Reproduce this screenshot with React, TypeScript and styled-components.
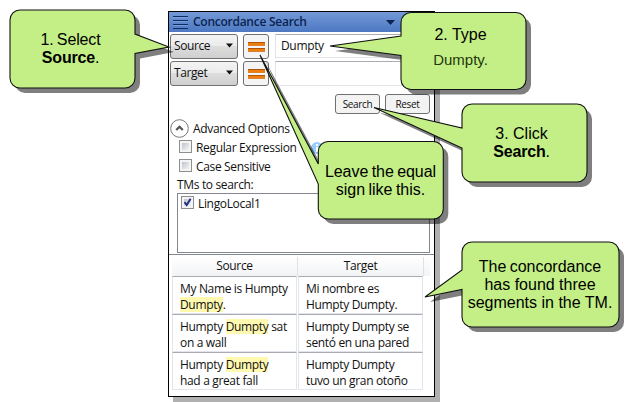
import React from 'react';
import styled, { createGlobalStyle } from 'styled-components';

const Global = createGlobalStyle`
  * { box-sizing: border-box; }
  body { margin: 0; background: #fff; }
`;

const Stage = styled.main`
  position: relative;
  width: 634px;
  height: 402px;
  overflow: hidden;
  padding: 11px 0 0 168px;
  font-family: 'Open Sans', 'Noto Sans', sans-serif;
  font-size: 12px;
  line-height: 16px;
  letter-spacing: -0.34px;
  color: #111;
`;

const Panel = styled.section`
  width: 267px;
  height: 386px;
  border: 1px solid #000;
  background: #fff;
  box-shadow: 5px 5px 0 #b0b0b0;
  display: flex;
  flex-direction: column;
`;

const TitleBar = styled.header`
  height: 20px;
  flex: none;
  display: flex;
  align-items: center;
  padding: 0 39px 0 4px;
  background: linear-gradient(#7399d6, #4d78c2);
`;

const TitleText = styled.h1`
  flex: 1;
  margin: 0 0 1px 5px;
  font-size: 12px;
  font-weight: 600;
  line-height: 18px;
  letter-spacing: -0.26px;
  color: #0b2350;
`;

const SearchRow = styled.div`
  display: flex;
  height: 27px;
  flex: none;
  padding-left: 1px;
`;

const SearchRows = styled.div`
  padding-top: 2px;
`;

const Dropdown = styled.button`
  width: 68px;
  height: 25px;
  padding: 0 4px 2px 3px;
  display: flex;
  align-items: center;
  justify-content: space-between;
  border: 1px solid #707070;
  border-radius: 3px;
  background: linear-gradient(#f3f3f3, #ebebeb 49%, #dddddd 50%, #cfcfcf);
  font: inherit;
  letter-spacing: -0.4px;
  color: #111;
`;

const EqualButton = styled.button`
  width: 26px;
  height: 25px;
  margin-left: 5px;
  padding: 0;
  display: flex;
  flex-direction: column;
  align-items: center;
  justify-content: center;
  gap: 2px;
  border: 1px solid #707070;
  border-radius: 3px;
  background: #f4f4f4;
`;

const EqualBar = styled.span`
  width: 17px;
  height: 4px;
  border-top: 1px solid #a8560f;
  border-bottom: 1px solid #d9822f;
  background: #f07c0c;
`;

const Field = styled.div<{ $tall?: boolean }>`
  flex: 1;
  height: ${(p) => (p.$tall ? 25 : 24)}px;
  margin: 0 4px 0 6px;
  padding: 3px 5px;
  border: 1px solid #e2e4ea;
  border-top-color: #abadb3;
`;

const Actions = styled.div`
  display: flex;
  justify-content: flex-end;
  gap: 5px;
  padding: 6px 4px 0 0;
`;

const ActionButton = styled.button`
  width: 45px;
  height: 20px;
  padding: 0 0 1px;
  border: 1px solid #707070;
  border-radius: 3px;
  background: #f3f3f3;
  font: inherit;
  font-size: 10px;
  letter-spacing: -0.35px;
  color: #111;
`;

const Expander = styled.div`
  display: flex;
  align-items: center;
  gap: 4px;
  margin-top: 5px;
  padding-left: 1px;
  height: 19px;
`;

const OptionRow = styled.label<{ $inList?: boolean }>`
  display: flex;
  align-items: center;
  gap: 4px;
  height: 19px;
  padding-left: ${(p) => (p.$inList ? 3 : 10)}px;
`;

const Box = styled.span`
  width: 13px;
  height: 13px;
  flex: none;
  display: flex;
  border: 1px solid #8e8f8f;
  background: linear-gradient(135deg, #bfc4cc, #f3f3f5) content-box, #f4f4f4;
  padding: 2px;
  margin-bottom: 2px;
`;

const Tick = styled.svg`
  width: 11px;
  height: 11px;
  margin: -2px;
  flex: none;
`;

const InfoIcon = styled.svg`
  width: 12px;
  height: 12px;
  margin-left: 10px;
`;

const ListLabel = styled.div`
  margin-top: 1px;
  padding-left: 8px;
  height: 17px;
`;

const TmList = styled.div`
  height: 60px;
  flex: none;
  margin: -1px 4px 0 8px;
  border: 1px solid #828790;
`;

const Results = styled.div`
  margin-top: 1px;
  border-top: 1px solid #828790;
  padding: 2px 4px 0 3px;
`;

const ResultHead = styled.div`
  display: grid;
  grid-template-columns: 126px 126px 6px;
  height: 19px;
  background: linear-gradient(#fff, #f2f3f5);
  text-align: center;
`;

const HeadCell = styled.div`
  padding-top: 1px;
  border-right: 1px solid #dfe1e5;
`;

const ResultRow = styled.div`
  display: grid;
  grid-template-columns: 125px 125px;
  gap: 1px;
  height: 38px;
`;

const ResultCell = styled.div`
  padding: 4px 0 0 7px;
  border: 1px solid #e2e5ee;
  border-top: 1px solid #a9abb2;
  white-space: nowrap;
`;

const Mark = styled.span`
  display: inline-block;
  height: 15px;
  line-height: 16px;
  vertical-align: top;
  background: #fff9b0;
`;

/* Annotation layer over the panel */
const Balloons = styled.svg`
  position: absolute;
  inset: 0;
  width: 634px;
  height: 402px;
`;

const Note = styled.div<{ $x: number; $y: number; $w: number; $h: number }>`
  position: absolute;
  left: ${(p) => p.$x}px;
  top: ${(p) => p.$y}px;
  width: ${(p) => p.$w}px;
  height: ${(p) => p.$h}px;
  display: flex;
  flex-direction: column;
  align-items: center;
  justify-content: center;
  font: 16px/18px 'Liberation Sans', Arial, sans-serif;
  letter-spacing: 0;
  color: #000;
  white-space: nowrap;
`;

const NoteLine = styled.div<{ $spacing?: number }>`
  letter-spacing: ${(p) => p.$spacing ?? 0}px;
  word-spacing: ${(p) => (p.$spacing ? -1 : 0)}px;
`;

const LightLine = styled.div`
  margin-top: 7px;
  font-size: 15px;
  color: #24380c;
`;

const balloon = (
  x: number, y: number, w: number, h: number,
  tx: number, ty: number, a: number, b: number,
) => {
  const r = 10;
  return `M${x + r} ${y}H${x + w - r}A${r} ${r} 0 0 1 ${x + w} ${y + r}V${y + h - r}A${r} ${r} 0 0 1 ${x + w - r} ${y + h}H${x + r}A${r} ${r} 0 0 1 ${x} ${y + h - r}V${b}L${tx} ${ty}L${x} ${a}V${y + r}A${r} ${r} 0 0 1 ${x + r} ${y}Z`;
};

const balloonPaths = [
  'M20 10H125A10 10 0 0 1 135 20V34L169 47L135 53.5V78A10 10 0 0 1 125 88H20A10 10 0 0 1 10 78V20A10 10 0 0 1 20 10Z',
  balloon(401, 12.5, 125, 77, 330, 46, 36, 55.5),
  balloon(462, 104, 125, 78, 374, 107.5, 128, 148),
  balloon(318.3, 141.5, 125, 77.5, 260, 55, 164, 184),
  balloon(462, 242, 157, 85, 425, 297, 270, 289.5),
];

const Balloon = ({ d }: { d: string }) => (
  <g>
    <path d={d} transform="translate(5 5)" fill="#000" fillOpacity=".5" />
    <path d={d} fill="#c3ef86" stroke="#111" strokeWidth="1.1" />
  </g>
);

const Arrow = () => (
  <svg width="7" height="5" viewBox="0 0 7 5"><path d="M0 .5H7L3.5 4.5Z" fill="#111" /></svg>
);

const SearchLine = ({ label, value, tall }: { label: string; value?: string; tall?: boolean }) => (
  <SearchRow>
    <Dropdown>{label}<Arrow /></Dropdown>
    <EqualButton><EqualBar /><EqualBar /></EqualButton>
    <Field $tall={tall}>{value}</Field>
  </SearchRow>
);

const results: [React.ReactNode, React.ReactNode][] = [
  [<>My Name is Humpty<br /><Mark>Dumpty</Mark>.</>, <>Mi nombre es<br />Humpty Dumpty.</>],
  [<>Humpty <Mark>Dumpty</Mark> sat<br />on a wall</>, <>Humpty Dumpty se<br />sentó en una pared</>],
  [<>Humpty <Mark>Dumpty</Mark><br />had a great fall</>, <>Humpty Dumpty<br />tuvo un gran otoño</>],
];

export default function App() {
  return (
    <>
      <Global />
      <Stage>
        <Panel>
          <TitleBar>
            <svg width="15" height="14" viewBox="0 0 15 14">
              <path d="M0 1.5H15M0 5.5H15M0 9.5H15M0 13.5H15" stroke="#0d2c66" />
              <path d="M0 2.5H15M0 6.5H15M0 10.5H15" stroke="#8fb2ea" strokeOpacity=".5" />
            </svg>
            <TitleText>Concordance Search</TitleText>
            <svg width="9" height="5" viewBox="0 0 9 5"><path d="M0 0H9L4.5 5Z" fill="#0b2350" /></svg>
          </TitleBar>
          <SearchRows>
            <SearchLine label="Source" value="Dumpty" />
            <SearchLine label="Target" tall />
          </SearchRows>
          <Actions>
            <ActionButton>Search</ActionButton>
            <ActionButton>Reset</ActionButton>
          </Actions>
          <Expander>
            <svg width="19" height="19" viewBox="0 0 19 19">
              <circle cx="9.5" cy="9.5" r="8.8" fill="#fff" stroke="#777" />
              <path d="M6.2 11L9.5 7.8L12.8 11" fill="none" stroke="#555" strokeWidth="2.2" />
            </svg>
            Advanced Options
          </Expander>
          <OptionRow>
            <Box />
            Regular Expression
            <InfoIcon viewBox="0 0 12 12">
              <circle cx="6" cy="6" r="6" fill="#99ccfb" />
              <path d="M6 2V4M6 5V10" stroke="#fff" strokeWidth="2" />
            </InfoIcon>
          </OptionRow>
          <OptionRow><Box />Case Sensitive</OptionRow>
          <ListLabel>TMs to search:</ListLabel>
          <TmList>
            <OptionRow $inList>
              <Box>
                <Tick viewBox="0 0 11 11"><path d="M2.5 5.2L4.7 8L8.6 1.8" fill="none" stroke="#1f2f86" strokeWidth="2" /></Tick>
              </Box>
              LingoLocal1
            </OptionRow>
          </TmList>
          <Results>
            <ResultHead><HeadCell>Source</HeadCell><HeadCell>Target</HeadCell></ResultHead>
            {results.map(([source, target], i) => (
              <ResultRow key={i}>
                <ResultCell>{source}</ResultCell>
                <ResultCell>{target}</ResultCell>
              </ResultRow>
            ))}
          </Results>
        </Panel>
        <Balloons viewBox="0 0 634 402">
          {balloonPaths.map((d) => <Balloon key={d} d={d} />)}
        </Balloons>
        <Note $x={8} $y={10} $w={125} $h={78}>
          <NoteLine $spacing={-0.15}>1. Select</NoteLine>
          <NoteLine $spacing={-0.2}><b>Source</b>.</NoteLine>
        </Note>
        <Note $x={398} $y={8} $w={125} $h={78}>
          <NoteLine>2. Type</NoteLine>
          <LightLine>Dumpty.</LightLine>
        </Note>
        <Note $x={459} $y={104} $w={125} $h={78}>
          <NoteLine>3. Click</NoteLine>
          <NoteLine $spacing={-0.2}><b>Search</b>.</NoteLine>
        </Note>
        <Note $x={318} $y={142} $w={125} $h={78}>
          <NoteLine $spacing={-0.05}>Leave the equal</NoteLine>
          <NoteLine $spacing={-0.02}>sign like this.</NoteLine>
        </Note>
        <Note $x={462} $y={242} $w={156} $h={85}>
          <NoteLine $spacing={-0.02}>The concordance</NoteLine>
          <NoteLine>has found three</NoteLine>
          <NoteLine>segments in the TM.</NoteLine>
        </Note>
      </Stage>
    </>
  );
}
